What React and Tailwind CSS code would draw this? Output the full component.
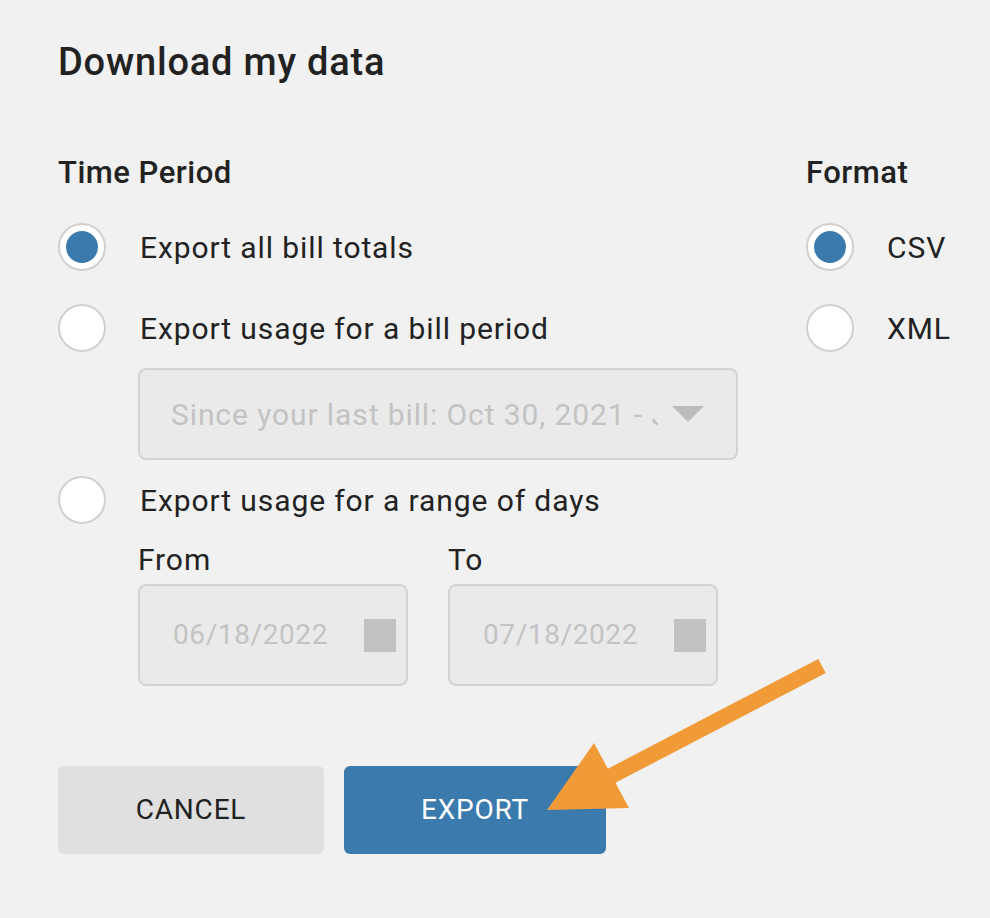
const font = { fontFamily: 'Roboto, "Liberation Sans", sans-serif' };

const Radio = ({ checked }) => (
  <div className="w-[48px] h-[48px] shrink-0 rounded-full bg-white border-2 border-[#d0d0d0] flex items-center justify-center">
    {checked && <div className="w-[32px] h-[32px] rounded-full bg-[#3a7aad]" />}
  </div>
);

const RadioRow = ({ checked, label, gap = 'gap-[34px]' }) => (
  <div className={`h-[48px] flex items-center ${gap}`}>
    <Radio checked={checked} />
    <span className="text-[30px] tracking-[0.9px] text-[#222]">{label}</span>
  </div>
);

const DateInput = ({ value }) => (
  <div className="w-[270px] h-[102px] rounded-[8px] border-2 border-[#d3d3d3] bg-[#eaeaea] flex items-center justify-between pl-[33px] pr-[10px]">
    <span className="text-[28px] tracking-[0.6px] text-[#c3c3c3]">{value}</span>
    <div className="w-[32px] h-[33px] bg-[#c2c2c2]" />
  </div>
);

export default function App() {
  return (
    <div className="relative min-h-screen w-[990px] h-[918px] bg-[#f1f1f1] overflow-hidden pl-[58px] pt-[38px]" style={font}>
      <h1 className="h-[48px] leading-[48px] text-[38px] tracking-[0.8px] font-medium text-[#222]">Download my data</h1>

      <div className="flex mt-[63px]">
        <div className="w-[748px]">
          <div className="h-[48px] leading-[48px] text-[31px] tracking-[0.5px] font-medium text-[#222]">Time Period</div>
          <div className="mt-[26px]">
            <RadioRow checked label="Export all bill totals" />
          </div>
          <div className="mt-[33px]">
            <RadioRow label="Export usage for a bill period" />
          </div>
          <div className="ml-[80px] mt-[16px] w-[600px] h-[92px] rounded-[8px] border-2 border-[#d3d3d3] bg-[#eaeaea] flex items-center pl-[31px] pr-[32px]">
            <div className="w-[487px] overflow-hidden whitespace-nowrap text-[30px] tracking-[0.9px] text-[#c3c3c3]">
              Since your last bill: Oct 30, 2021 - Jul 18, 2022
            </div>
            <svg className="ml-auto" width="32" height="16" viewBox="0 0 32 16">
              <polygon points="0,0 32,0 16,16" fill="#bdbdbd" />
            </svg>
          </div>
          <div className="mt-[16px]">
            <RadioRow label="Export usage for a range of days" />
          </div>
          <div className="ml-[80px] mt-[20px] flex gap-[40px]">
            <div>
              <div className="h-[32px] leading-[32px] text-[30px] tracking-[0.9px] text-[#222]">From</div>
              <div className="mt-[8px]">
                <DateInput value="06/18/2022" />
              </div>
            </div>
            <div>
              <div className="h-[32px] leading-[32px] text-[30px] tracking-[0.9px] text-[#222]">To</div>
              <div className="mt-[8px]">
                <DateInput value="07/18/2022" />
              </div>
            </div>
          </div>
        </div>

        <div>
          <div className="h-[48px] leading-[48px] text-[31px] tracking-[0.5px] font-medium text-[#222]">Format</div>
          <div className="mt-[26px]">
            <RadioRow checked label="CSV" gap="gap-[33px]" />
          </div>
          <div className="mt-[33px]">
            <RadioRow label="XML" gap="gap-[33px]" />
          </div>
        </div>
      </div>

      <div className="flex gap-[20px] mt-[80px]">
        <button className="w-[266px] h-[88px] rounded-[6px] bg-[#e0e0e0] text-[28px] tracking-[0.8px] text-[#222] uppercase">Cancel</button>
        <button className="w-[262px] h-[88px] rounded-[6px] bg-[#3a7aad] text-[28px] tracking-[0.8px] text-white uppercase">Export</button>
      </div>

      <svg className="absolute inset-0 pointer-events-none" width="990" height="918" viewBox="0 0 990 918">
        <line x1="822" y1="666" x2="592" y2="786" stroke="#f09b37" strokeWidth="16" />
        <polygon points="547,810 594,743 629,808" fill="#f09b37" />
      </svg>
    </div>
  );
}
